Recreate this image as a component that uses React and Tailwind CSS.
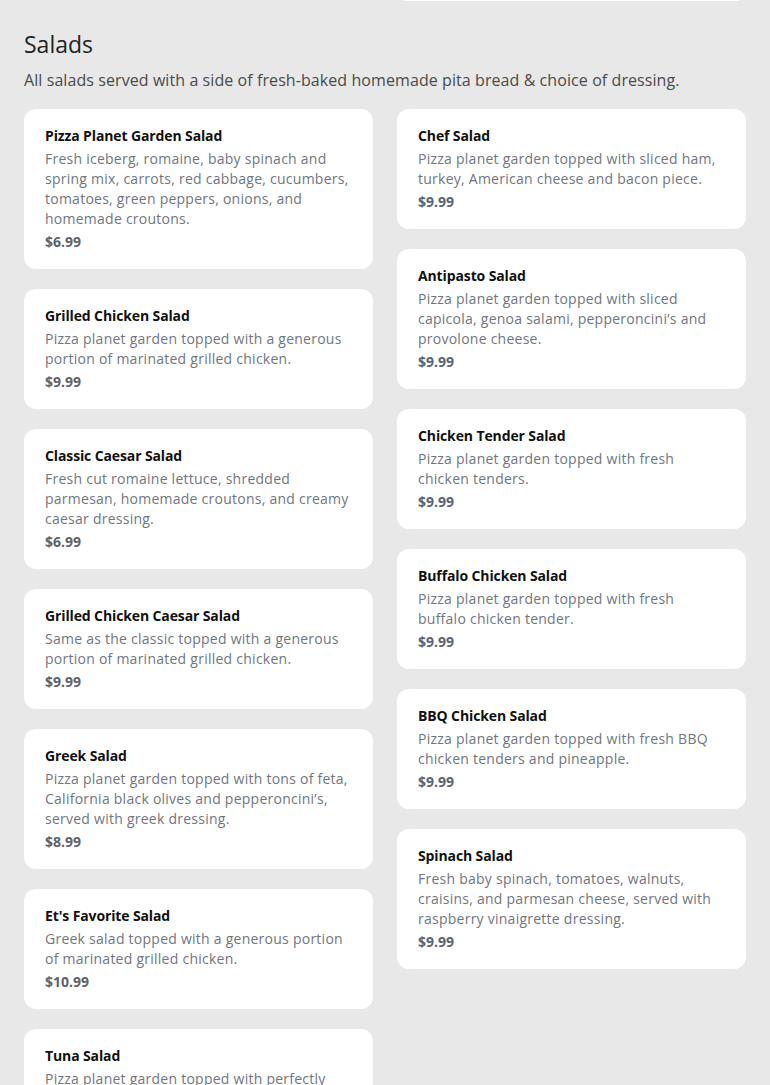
const left = [
  {
    name: "Pizza Planet Garden Salad",
    desc: "Fresh iceberg, romaine, baby spinach and spring mix, carrots, red cabbage, cucumbers, tomatoes, green peppers, onions, and homemade croutons.",
    price: "$6.99",
  },
  {
    name: "Grilled Chicken Salad",
    desc: "Pizza planet garden topped with a generous portion of marinated grilled chicken.",
    price: "$9.99",
  },
  {
    name: "Classic Caesar Salad",
    desc: "Fresh cut romaine lettuce, shredded parmesan, homemade croutons, and creamy caesar dressing.",
    price: "$6.99",
  },
  {
    name: "Grilled Chicken Caesar Salad",
    desc: "Same as the classic topped with a generous portion of marinated grilled chicken.",
    price: "$9.99",
  },
  {
    name: "Greek Salad",
    desc: "Pizza planet garden topped with tons of feta, California black olives and pepperoncini’s, served with greek dressing.",
    price: "$8.99",
  },
  {
    name: "Et's Favorite Salad",
    desc: "Greek salad topped with a generous portion of marinated grilled chicken.",
    price: "$10.99",
  },
  {
    name: "Tuna Salad",
    desc: "Pizza planet garden topped with perfectly seasoned tuna salad.",
    price: "$9.99",
  },
];

const right = [
  {
    name: "Chef Salad",
    desc: "Pizza planet garden topped with sliced ham, turkey, American cheese and bacon piece.",
    price: "$9.99",
  },
  {
    name: "Antipasto Salad",
    desc: "Pizza planet garden topped with sliced capicola, genoa salami, pepperoncini’s and provolone cheese.",
    price: "$9.99",
  },
  {
    name: "Chicken Tender Salad",
    desc: "Pizza planet garden topped with fresh chicken tenders.",
    price: "$9.99",
  },
  {
    name: "Buffalo Chicken Salad",
    desc: "Pizza planet garden topped with fresh buffalo chicken tender.",
    price: "$9.99",
  },
  {
    name: "BBQ Chicken Salad",
    desc: "Pizza planet garden topped with fresh BBQ chicken tenders and pineapple.",
    price: "$9.99",
  },
  {
    name: "Spinach Salad",
    desc: "Fresh baby spinach, tomatoes, walnuts, craisins, and parmesan cheese, served with raspberry vinaigrette dressing.",
    price: "$9.99",
  },
];

function ItemCard({ item }) {
  return (
    <div className="bg-white rounded-xl px-[21px] pt-[17px] pb-[17px]">
      <h3 className="text-sm leading-5 font-bold tracking-[-0.12px] text-[#111111]">{item.name}</h3>
      <p className="mt-[3px] text-sm leading-5 tracking-[0.25px] text-[#71767e]">{item.desc}</p>
      <p className="mt-[3px] text-sm leading-5 font-bold text-[#5d636d]">{item.price}</p>
    </div>
  );
}

export default function App() {
  return (
    <div
      className="min-h-screen bg-[#e8e8e8] px-6 pb-10"
      style={{ fontFamily: '"Open Sans", "Noto Sans", sans-serif' }}
    >
      {/* tail of the previous section's card */}
      <div className="grid grid-cols-2 gap-6 h-px">
        <div />
        <div className="-mt-[19px] h-5 rounded-xl bg-white" />
      </div>

      <h2 className="pt-[27px] text-[23px] leading-8 text-[#222222]">Salads</h2>
      <p className="mt-2 text-base leading-6 tracking-[0.08px] text-[#4a4a4a]">
        All salads served with a side of fresh-baked homemade pita bread &amp; choice of dressing.
      </p>

      <div className="mt-[17px] grid grid-cols-2 gap-6 items-start">
        <div className="flex flex-col gap-5">
          {left.map((item) => (
            <ItemCard key={item.name} item={item} />
          ))}
        </div>
        <div className="flex flex-col gap-5">
          {right.map((item) => (
            <ItemCard key={item.name} item={item} />
          ))}
        </div>
      </div>
    </div>
  );
}
